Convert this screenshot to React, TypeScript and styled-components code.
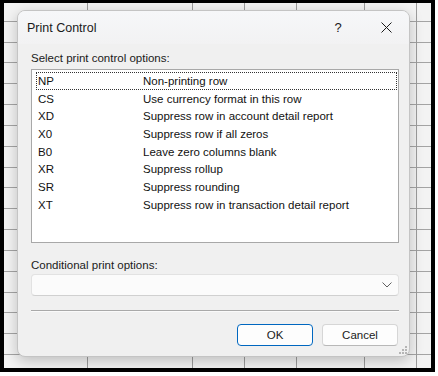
import styled, { createGlobalStyle } from "styled-components";

const GlobalStyle = createGlobalStyle`
    body {
        margin: 0;
        background: #fff;
        font-family: 'Segoe UI', 'Liberation Sans', Arial, sans-serif;
    }
`

const Frame = styled.div`
    position: relative;
    width: 435px;
    height: 372px;
    box-sizing: border-box;
    border: 4px solid #000;
    border-top-width: 3px;
    overflow: hidden;
`

const Sheet = styled.div`
    display: grid;
    grid-template-columns: 84px 105px 52px 52px 68px 52px 1fr;
    height: 100%;
`

const SheetColumn = styled.div`
    border-right: 1px solid #9c9c9c;
    background-color: #f3f3f3;
    background-image: repeating-linear-gradient(
        to bottom,
        transparent 0,
        transparent 19.83px,
        #a4a4a4 19.83px,
        #a4a4a4 20.83px
    );
    background-position: 0 -2px;

    &:last-child {
        border-right: none;
    }
`

const Dialog = styled.div`
    position: absolute;
    left: 13px;
    top: 7px;
    width: 393px;
    height: 347px;
    box-sizing: border-box;
    border: 1px solid #c4c4c4;
    border-radius: 8px;
    background: #f0f0f0;
    box-shadow: 0 4px 14px rgba(0, 0, 0, 0.22);
    display: flex;
    flex-direction: column;
    overflow: hidden;
`

const TitleBar = styled.div`
    height: 33px;
    display: flex;
    align-items: center;
    background: linear-gradient(to bottom, #f6f7f9, #f2f2f3);
    padding-left: 9px;
`

const Title = styled.div`
    flex: 1;
    font-size: 12.5px;
    color: #1a1a1a;
`

const TitleButton = styled.div<{ $mr?: number }>`
    width: 46px;
    height: 33px;
    display: flex;
    align-items: center;
    justify-content: center;
    margin-right: ${p => p.$mr ?? 0}px;
    font-size: 13px;
    color: #1a1a1a;
`

const Body = styled.div`
    flex: 1;
    display: flex;
    flex-direction: column;
    padding: 6px 10px 0 13px;
`

const Label = styled.div<{ $mt?: number }>`
    font-size: 11.5px;
    line-height: 16px;
    color: #1a1a1a;
    margin-top: ${p => p.$mt ?? 0}px;
`

const ListBox = styled.div`
    margin-top: 3px;
    height: 174px;
    box-sizing: border-box;
    border: 1px solid #a8a8a8;
    background: #fff;
    padding: 2px 1px 0 4px;
`

const Row = styled.div<{ $focused?: boolean }>`
    display: flex;
    align-items: center;
    height: 17.7px;
    box-sizing: border-box;
    padding-left: 2px;
    font-size: 11.5px;
    color: #111;
    outline: ${p => (p.$focused ? "1px dotted #333" : "none")};
    outline-offset: -1px;
`

const Code = styled.span`
    width: 105px;
    flex-shrink: 0;
`

const ComboBox = styled.div`
    margin-top: 1px;
    height: 22px;
    box-sizing: border-box;
    border: 1px solid #e2e2e2;
    border-bottom-color: #d0d0d0;
    border-radius: 4px;
    background: #fbfbfb;
    display: flex;
    align-items: center;
    justify-content: flex-end;
    padding-right: 6px;
`

const Separator = styled.div`
    margin-top: 14px;
    height: 1px;
    background: #a9a9a9;
    box-shadow: 0 1px 0 #fafafa;
`

const ButtonRow = styled.div`
    margin-top: 13px;
    display: flex;
    justify-content: flex-end;
    gap: 9px;
    padding-right: 1px;
`

const Button = styled.div<{ $primary?: boolean }>`
    width: 76px;
    height: 22px;
    box-sizing: border-box;
    border: 1px solid ${p => (p.$primary ? "#0067c0" : "#d6d6d6")};
    border-bottom-color: ${p => (p.$primary ? "#0067c0" : "#b8b8b8")};
    border-radius: 4px;
    background: #fdfdfd;
    display: flex;
    align-items: center;
    justify-content: center;
    font-size: 11.5px;
    color: #1a1a1a;
`

const Grip = styled.svg`
    position: absolute;
    right: 2px;
    bottom: 2px;
`

const rows = [
    ["NP", "Non-printing row"],
    ["CS", "Use currency format in this row"],
    ["XD", "Suppress row in account detail report"],
    ["X0", "Suppress row if all zeros"],
    ["B0", "Leave zero columns blank"],
    ["XR", "Suppress rollup"],
    ["SR", "Suppress rounding"],
    ["XT", "Suppress row in transaction detail report"],
]

export default function App() {
    return (
        <>
            <GlobalStyle />
            <Frame>
                <Sheet>
                    {Array.from({ length: 7 }).map((_, i) => (
                        <SheetColumn key={i} />
                    ))}
                </Sheet>
                <Dialog>
                    <TitleBar>
                        <Title>Print Control</Title>
                        <TitleButton $mr={2}>?</TitleButton>
                        <TitleButton>
                            <svg width="11" height="11" viewBox="0 0 11 11">
                                <path d="M0.5 0.5 L10.5 10.5 M10.5 0.5 L0.5 10.5" stroke="#1a1a1a" strokeWidth="1" />
                            </svg>
                        </TitleButton>
                    </TitleBar>
                    <Body>
                        <Label>Select print control options:</Label>
                        <ListBox>
                            {rows.map(([code, desc], i) => (
                                <Row key={code} $focused={i === 0}>
                                    <Code>{code}</Code>
                                    <span>{desc}</span>
                                </Row>
                            ))}
                        </ListBox>
                        <Label $mt={14}>Conditional print options:</Label>
                        <ComboBox>
                            <svg width="10" height="6" viewBox="0 0 10 6">
                                <path d="M0.5 0.5 L5 5 L9.5 0.5" fill="none" stroke="#606060" strokeWidth="1" />
                            </svg>
                        </ComboBox>
                        <Separator />
                        <ButtonRow>
                            <Button $primary>OK</Button>
                            <Button>Cancel</Button>
                        </ButtonRow>
                    </Body>
                    <Grip width="8" height="8" viewBox="0 0 8 8">
                        <rect x="6" y="0" width="2" height="2" fill="#b5b5b5" />
                        <rect x="3" y="3" width="2" height="2" fill="#b5b5b5" />
                        <rect x="6" y="3" width="2" height="2" fill="#b5b5b5" />
                        <rect x="0" y="6" width="2" height="2" fill="#b5b5b5" />
                        <rect x="3" y="6" width="2" height="2" fill="#b5b5b5" />
                        <rect x="6" y="6" width="2" height="2" fill="#b5b5b5" />
                    </Grip>
                </Dialog>
            </Frame>
        </>
    )
}
